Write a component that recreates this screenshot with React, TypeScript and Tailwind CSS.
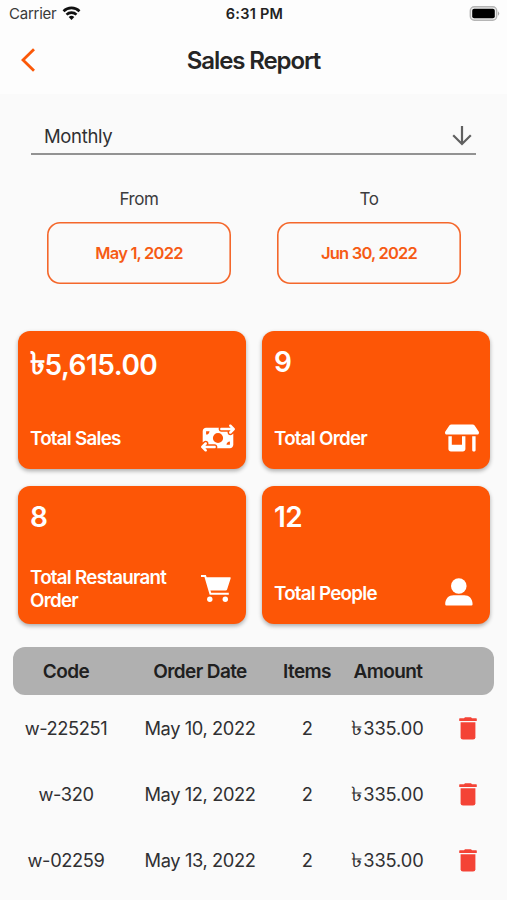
import type { ReactNode } from "react";
import { FaMoneyBillTransfer, FaShop } from "react-icons/fa6";

function StatusBar() {
  return (
    <div className="grid h-7 grid-cols-3 items-center pl-[9px] pr-[7px]">
      <div className="flex items-center gap-1.5 text-[15px] tracking-[-0.25px] text-[#3a3a3a]">
        <span>Carrier</span>
        <svg className="mb-0.5" width="19" height="14" viewBox="0 0 18 14" fill="none" stroke="#111" strokeWidth="2.6">
          <path d="M1 5.2a11.4 11.4 0 0 1 16 0" />
          <path d="M4 8.6a7.2 7.2 0 0 1 10 0" />
          <path d="M9 14 6.2 11.1a4 4 0 0 1 5.6 0z" fill="#111" stroke="none" />
        </svg>
      </div>
      <div className="text-center text-[14.5px] font-semibold tracking-[0.25px] text-[#222]">6:31 PM</div>
      <svg className="-mt-0.5 justify-self-end" width="31" height="15" viewBox="0 0 31 15">
        <rect x="1.3" y="0.8" width="26.4" height="13.4" rx="4" fill="#eee" stroke="#b5b5b5" strokeWidth="1.4" />
        <rect x="3.2" y="2.8" width="22.6" height="9.4" rx="2" fill="#000" />
        <path d="M29 5.2q2.4 2.3 0 4.6z" fill="#a8a8a8" />
      </svg>
    </div>
  );
}

function CartIcon() {
  return (
    <svg className="mb-2 mr-[4px]" width="30" height="27" viewBox="0 0 30 27" fill="#fff">
      <path d="M0 1h4.2l5.2 17.7h18.4" fill="none" stroke="#fff" strokeWidth="2" />
      <path d="M4.8 2.2H29q1 0 .7 1l-3.6 11.4q-.3 1-1.4 1H8.7z" />
      <circle cx="8.8" cy="24.2" r="2.7" />
      <circle cx="24.3" cy="24.2" r="2.7" />
    </svg>
  );
}

function PersonIcon() {
  return (
    <svg className="mr-[6px]" width="28" height="28" viewBox="0 0 28 28" fill="#fff">
      <circle cx="13.8" cy="8" r="7.8" />
      <path d="M0.2 26.2C0.2 20.5 3.8 17.2 8.6 17.2h10.6c4.8 0 8.4 3.3 8.4 9q0 1.2-1.2 1.2h-25q-1.2 0-1.2-1.2z" />
    </svg>
  );
}

function TrashIcon() {
  return (
    <svg className="ml-[-2px] justify-self-center" width="18" height="23" viewBox="0 0 18 23" fill="#f44336">
      <path d="M5 1.3 6 .3h6l1 1h4.2q.6 0 .6.6v1.6q0 .5-.6.5H.8q-.6 0-.6-.5V1.9q0-.6.6-.6z" />
      <path d="M1.6 5.3h14.8v14.9q0 2.4-2.4 2.4H4q-2.4 0-2.4-2.4z" />
    </svg>
  );
}

function Money({ amount, bold }: { amount: string; bold?: boolean }) {
  return (
    <>
      <span
        className={
          bold
            ? "inline-block -translate-y-[0.02em] text-[1.1em] font-bold leading-none"
            : "inline-block -translate-y-[0.02em] scale-x-115 pr-px text-[1.1em] leading-none"
        }
      >
        ৳
      </span>
      {amount}
    </>
  );
}

function DateField({ label, value }: { label: string; value: string }) {
  return (
    <div className="flex w-[184px] flex-col items-center">
      <span className="h-[34px] text-[17px] leading-[22px] tracking-[-0.4px] text-[#3c3c3e]">{label}</span>
      <div className="flex h-[61.5px] w-full items-center justify-center rounded-[13px] pt-px text-[16.5px] font-semibold tracking-[-0.8px] text-[#f65a14] shadow-[inset_0_0_0_1.6px_#f4672b]">
        {value}
      </div>
    </div>
  );
}

function Card({ value, label, icon, large, wrapped }: { value: ReactNode; label: string; icon: ReactNode; large?: boolean; wrapped?: boolean }) {
  return (
    <div className="flex h-[138px] flex-col justify-between rounded-[12px] bg-[#fd5606] pl-3 pr-[11px] pt-[13px] text-white shadow-[0_2px_4px_rgba(0,0,0,0.32)]">
      <div className={large ? "pt-[3px] text-[28px] font-semibold leading-9 tracking-[-0.5px]" : "text-[28px] font-semibold leading-9 tracking-[-0.6px]"}>
        {value}
      </div>
      <div className="flex h-16 items-center justify-between">
        <div className={`w-[145px] text-[18.8px] font-semibold leading-[23px] tracking-[-0.75px] ${wrapped ? "pb-[7px]" : "pt-[2px]"}`}>{label}</div>
        {icon}
      </div>
    </div>
  );
}

const orders = [
  ["w-225251", "May 10, 2022"],
  ["w-320", "May 12, 2022"],
  ["w-02259", "May 13, 2022"],
];

const columns = "grid grid-cols-[106px_162px_52px_110px_51px] items-center text-center";

export default function App() {
  return (
    <div className="h-[900px] w-[507px] overflow-hidden bg-[#fafafa] font-['Inter','Noto_Sans',sans-serif] text-[#303032]">
      <header className="h-[94px] bg-[#fdfdfd]">
        <StatusBar />
        <div className="grid h-16 grid-cols-[40px_1fr_40px] items-center">
          <svg className="ml-5" width="16" height="26" viewBox="0 0 16 26" fill="none" stroke="#fb5808" strokeWidth="2.8">
            <path d="M14 2.2 3 13l11 10.8" />
          </svg>
          <h1 className="pt-px text-center text-[24px] font-semibold tracking-[-1.1px] text-[#252525]">Sales Report</h1>
        </div>
      </header>
      <div className="mx-[31px] mt-[22px] flex h-[39px] items-center justify-between border-b-2 border-[#929292] pl-[13px] pr-[4px]">
        <span className="pt-[4px] text-[18.5px] tracking-[-0.35px]">Monthly</span>
        <svg className="mt-px" width="20" height="21" viewBox="0 0 20 21" fill="none" stroke="#606060" strokeWidth="2.2">
          <path d="M10 1v18M1.2 10.3 10 19l8.8-8.7" />
        </svg>
      </div>
      <div className="flex justify-between pl-[47px] pr-[46px] pt-[33px]">
        <DateField label="From" value="May 1, 2022" />
        <DateField label="To" value="Jun 30, 2022" />
      </div>
      <div className="mx-[18px] mr-[17px] mt-[47.5px] grid grid-cols-2 gap-x-4 gap-y-[17px]">
        <Card large value={<Money bold amount="5,615.00" />} label="Total Sales" icon={<FaMoneyBillTransfer size={34} className="mt-px" />} />
        <Card value="9" label="Total Order" icon={<FaShop size={34} className="mt-px" />} />
        <Card wrapped value="8" label="Total Restaurant Order" icon={<CartIcon />} />
        <Card value="12" label="Total People" icon={<PersonIcon />} />
      </div>
      <div className={`${columns} mx-[13px] mt-[23px] h-12 rounded-[12px] bg-[#b0b0b0] pt-[2px] text-[19px] font-semibold tracking-[-0.6px] text-[#202020]`}>
        <span>Code</span>
        <span>Order Date</span>
        <span>Items</span>
        <span>Amount</span>
      </div>
      {orders.map(([code, date]) => (
        <div key={code} className={`${columns} mx-[13px] h-[66px] pt-px text-[18.3px] tracking-[-0.4px]`}>
          <span>{code}</span>
          <span>{date}</span>
          <span>2</span>
          <span className="tracking-[-0.1px]">
            <Money amount="335.00" />
          </span>
          <TrashIcon />
        </div>
      ))}
    </div>
  );
}
